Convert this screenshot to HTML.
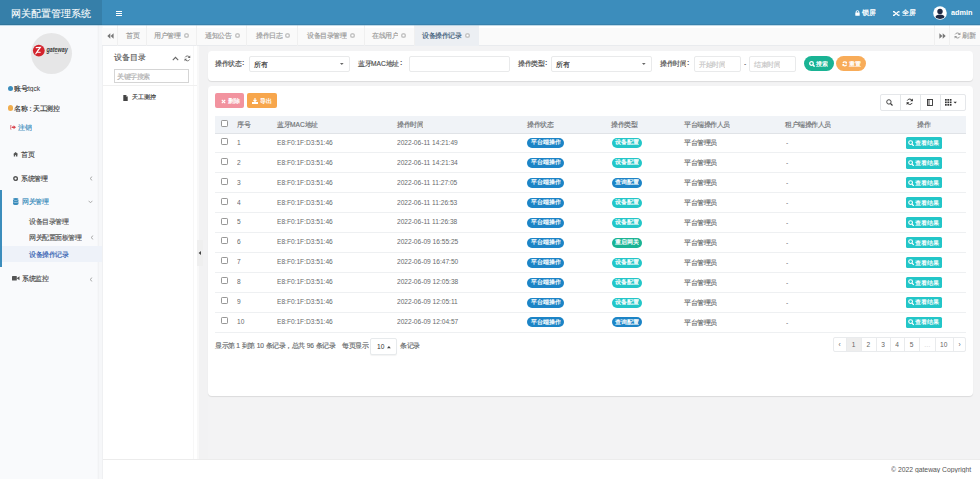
<!DOCTYPE html>
<html><head><meta charset="utf-8">
<style>
*{box-sizing:border-box;margin:0;padding:0}
html,body{width:980px;height:479px;overflow:hidden}
body{position:relative;background:#f3f3f4;font-family:"Liberation Sans",sans-serif;color:#676a6c;line-height:1}
.a{position:absolute;white-space:nowrap}
.t{transform:scale(.5);transform-origin:0 0;line-height:1;-webkit-text-stroke:.28px currentColor}
.t.b{-webkit-text-stroke:0}
svg{display:block}
</style></head>
<body>
<div class="a" style="left:0px;top:0px;width:980px;height:25px;background:#3c8dbc"></div>
<div class="a" style="left:0px;top:0px;width:102px;height:25px;background:#367fa9"></div>
<div class="a" style="left:0px;top:24px;width:980px;height:1px;background:rgba(0,0,0,.08)"></div>
<div class="a t" style="left:10.60px;top:7.92px;font-size:20.30px;color:#fff;font-weight:normal;-webkit-text-stroke:.15px #fff">网关配置管理系统</div>
<div class="a" style="left:115.8px;top:10.5px;width:6.6px;height:1.1px;background:#fff"></div>
<div class="a" style="left:115.8px;top:12.8px;width:6.6px;height:1.1px;background:#fff"></div>
<div class="a" style="left:115.8px;top:15.1px;width:6.6px;height:1.1px;background:#fff"></div>
<svg class="a" style="left:855.3px;top:9.8px" width="5" height="6" viewBox="0 0 5 6"><path d="M1.2 2.8V1.9a1.3 1.3 0 0 1 2.6 0v.9" fill="none" stroke="#fff" stroke-width="1"/><rect x="0.3" y="2.6" width="4.4" height="3.2" rx=".5" fill="#fff"/></svg>
<div class="a t b" style="left:861.50px;top:9.40px;font-size:14.40px;color:#fff;font-weight:bold;">锁屏</div>
<svg class="a" style="left:893.3px;top:10.5px" width="6.5" height="5" viewBox="0 0 6.5 5"><path d="M1 .8L5.5 4.2M5.5 .8L1 4.2" stroke="#fff" stroke-width="1.2"/><path d="M0 0h2.2L0 1.8zM6.5 0v1.8L4.3 0zM0 5V3.2L2.2 5zM6.5 5H4.3L6.5 3.2z" fill="#fff"/></svg>
<div class="a t b" style="left:901.50px;top:9.40px;font-size:14.40px;color:#fff;font-weight:bold;">全屏</div>
<svg class="a" style="left:933px;top:5.5px" width="14" height="14" viewBox="0 0 14 14"><circle cx="7" cy="7" r="6.8" fill="#fff"/><clipPath id="cp"><circle cx="7" cy="7" r="6"/></clipPath><g clip-path="url(#cp)" fill="#1f2a44"><circle cx="7" cy="5.4" r="2.7"/><path d="M1.5 14c0-4 2.5-5.6 5.5-5.6s5.5 1.6 5.5 5.6z"/></g></svg>
<div class="a t b" style="left:950.70px;top:8.58px;font-size:14.60px;color:#fff;font-weight:bold;">admin</div>
<div class="a" style="left:0px;top:25px;width:103px;height:454px;background:#f9fafc"></div>
<div class="a" style="left:96.5px;top:25px;width:6.5px;height:454px;background:#f6f7f9"></div>
<div class="a" style="left:98px;top:25px;width:1px;height:454px;background:#f1f2f4"></div>
<div class="a" style="left:101.5px;top:25px;width:1.5px;height:454px;background:#eff0f2"></div>
<div class="a" style="left:30.5px;top:32.5px;width:41px;height:41px;border-radius:50%;background:#e6e6e7"></div>
<svg class="a" style="left:30px;top:42px" width="40" height="16" viewBox="0 0 40 16"><circle cx="8.8" cy="8.6" r="5.9" fill="#d3232d"/><path d="M6.2 5.6l4.2-.3-3.6 4.9h3.4M8.6 7.2l-2.8 4.6" stroke="#fff" stroke-width="1.1" fill="none" stroke-linecap="round"/><text x="16.4" y="10.3" font-family="Liberation Sans" font-weight="bold" font-style="italic" font-size="7.6" fill="#3a3a3a" textLength="21.3" lengthAdjust="spacingAndGlyphs">gateway</text><rect x="24.5" y="11.4" width="4" height=".6" fill="#888"/></svg>
<div class="a" style="left:7.8px;top:85.5px;width:5.5px;height:5.5px;border-radius:50%;background:#3c8dbc"></div>
<div class="a t" style="left:13.50px;top:85.40px;font-size:13.20px;color:#333;font-weight:normal;">账号</div>
<div class="a t b" style="left:26.30px;top:84.88px;font-size:14.40px;color:#444;font-weight:bold;">:</div>
<div class="a t b" style="left:28.40px;top:84.94px;font-size:13.20px;color:#333;font-weight:normal;">tgck</div>
<div class="a" style="left:7.8px;top:105.3px;width:5.5px;height:5.5px;border-radius:50%;background:#f0ad4e"></div>
<div class="a t" style="left:13.50px;top:105.10px;font-size:13.20px;color:#333;font-weight:normal;">名称</div>
<div class="a t" style="left:26.90px;top:105.10px;font-size:13.20px;color:#333;font-weight:normal;">：</div>
<div class="a t" style="left:32.90px;top:105.10px;font-size:13.20px;color:#333;font-weight:normal;">天工测控</div>
<svg class="a" style="left:9.8px;top:125.3px" width="6.2" height="4.6" viewBox="0 0 6.2 4.6"><path d="M1.6 .4H.5v3.8h1.1" fill="none" stroke="#e06a72" stroke-width=".7"/><path d="M1.6 1.6h2V.3L6 2.3 3.6 4.3V3H1.6z" fill="#d9434e"/></svg>
<div class="a t" style="left:18.00px;top:123.70px;font-size:13.20px;color:#3c8dbc;font-weight:normal;">注销</div>
<svg class="a" style="left:13px;top:152px" width="5.2" height="4.5" viewBox="0 0 6 5.5"><path d="M3 0L0 2.6h.8v2.9h1.7V3.8h1v1.7h1.7V2.6H6z" fill="#555"/></svg>
<div class="a t" style="left:21.00px;top:151.00px;font-size:13.20px;color:#444;font-weight:normal;">首页</div>
<svg class="a" style="left:13px;top:175.5px" width="5.2" height="5.2" viewBox="0 0 6 6"><circle cx="3" cy="3" r="2.1" fill="none" stroke="#555" stroke-width="1.6"/></svg>
<div class="a t" style="left:20.50px;top:174.70px;font-size:13.20px;color:#444;font-weight:normal;">系统管理</div>
<svg class="a" style="left:88.5px;top:175.5px" width="4" height="5" viewBox="0 0 4 5"><path d="M3.2 .6L1 2.5 3.2 4.4" fill="none" stroke="#999" stroke-width=".8"/></svg>
<div class="a" style="left:0px;top:190px;width:2px;height:77px;background:#3c8dbc"></div>
<svg class="a" style="left:13px;top:198px" width="5.5" height="7" viewBox="0 0 5.5 7"><ellipse cx="2.75" cy="1.1" rx="2.75" ry="1.1" fill="#3c8dbc"/><path d="M0 1.7v1.5c0 .6 1.2 1.1 2.75 1.1s2.75-.5 2.75-1.1V1.7c-.6.5-1.6.7-2.75.7S.6 2.2 0 1.7zM0 4v1.7C0 6.4 1.2 7 2.75 7s2.75-.6 2.75-1.3V4c-.6.5-1.6.8-2.75.8S.6 4.5 0 4z" fill="#3c8dbc"/></svg>
<div class="a t" style="left:21.50px;top:198.00px;font-size:13.20px;color:#3c8dbc;font-weight:normal;">网关管理</div>
<svg class="a" style="left:87.5px;top:199.5px" width="5" height="4" viewBox="0 0 5 4"><path d="M.6 .8L2.5 2.8 4.4 .8" fill="none" stroke="#999" stroke-width=".8"/></svg>
<div class="a t" style="left:29.00px;top:217.70px;font-size:13.20px;color:#555;font-weight:normal;">设备目录管理</div>
<div class="a t" style="left:29.00px;top:234.30px;font-size:13.20px;color:#555;font-weight:normal;">网关配置面板管理</div>
<svg class="a" style="left:90px;top:235px" width="4" height="5" viewBox="0 0 4 5"><path d="M3.2 .6L1 2.5 3.2 4.4" fill="none" stroke="#999" stroke-width=".8"/></svg>
<div class="a" style="left:2px;top:246px;width:100px;height:16px;background:#eef2f9"></div>
<div class="a t" style="left:29.00px;top:250.70px;font-size:13.20px;color:#2f5bb0;font-weight:normal;">设备操作记录</div>
<svg class="a" style="left:12.3px;top:276.3px" width="7.5" height="4.5" viewBox="0 0 7.5 4.5"><rect x="0" y="0" width="4.8" height="4.5" rx=".6" fill="#555"/><path d="M4.6 2.25L7.5 .2V4.3z" fill="#555"/></svg>
<div class="a t" style="left:21.50px;top:275.20px;font-size:13.20px;color:#444;font-weight:normal;">系统监控</div>
<svg class="a" style="left:88.5px;top:276.5px" width="4" height="5" viewBox="0 0 4 5"><path d="M3.2 .6L1 2.5 3.2 4.4" fill="none" stroke="#999" stroke-width=".8"/></svg>
<div class="a" style="left:102px;top:25px;width:878px;height:21px;background:#fafafa;border-bottom:1px solid #e9ebee"></div>
<div class="a" style="left:103px;top:26px;width:877px;height:1.5px;background:#fff"></div>
<div class="a" style="left:102px;top:25px;width:15.5px;height:20.5px;border-right:1px solid #f0f0f0"></div>
<div class="a" style="left:117.5px;top:25px;width:29.5px;height:20.5px;border-right:1px solid #f0f0f0"></div>
<div class="a t" style="left:125.50px;top:32.30px;font-size:13.20px;color:#999;font-weight:normal;">首页</div>
<div class="a" style="left:147px;top:25px;width:50px;height:20.5px;border-right:1px solid #f0f0f0"></div>
<div class="a t" style="left:154.00px;top:32.30px;font-size:13.20px;color:#999;font-weight:normal;">用户管理</div>
<svg class="a" style="left:183.9px;top:33px" width="5" height="5" viewBox="0 0 5 5"><circle cx="2.5" cy="2.5" r="2.5" fill="#c4c4c4"/><circle cx="2.5" cy="2.5" r="1.1" fill="#fff"/></svg>
<div class="a" style="left:197px;top:25px;width:50px;height:20.5px;border-right:1px solid #f0f0f0"></div>
<div class="a t" style="left:205.00px;top:32.30px;font-size:13.20px;color:#999;font-weight:normal;">通知公告</div>
<svg class="a" style="left:234.9px;top:33px" width="5" height="5" viewBox="0 0 5 5"><circle cx="2.5" cy="2.5" r="2.5" fill="#c4c4c4"/><circle cx="2.5" cy="2.5" r="1.1" fill="#fff"/></svg>
<div class="a" style="left:247px;top:25px;width:51px;height:20.5px;border-right:1px solid #f0f0f0"></div>
<div class="a t" style="left:255.50px;top:32.30px;font-size:13.20px;color:#999;font-weight:normal;">操作日志</div>
<svg class="a" style="left:285.4px;top:33px" width="5" height="5" viewBox="0 0 5 5"><circle cx="2.5" cy="2.5" r="2.5" fill="#c4c4c4"/><circle cx="2.5" cy="2.5" r="1.1" fill="#fff"/></svg>
<div class="a" style="left:298px;top:25px;width:66.5px;height:20.5px;border-right:1px solid #f0f0f0"></div>
<div class="a t" style="left:307.00px;top:32.30px;font-size:13.20px;color:#999;font-weight:normal;">设备目录管理</div>
<svg class="a" style="left:350.1px;top:33px" width="5" height="5" viewBox="0 0 5 5"><circle cx="2.5" cy="2.5" r="2.5" fill="#c4c4c4"/><circle cx="2.5" cy="2.5" r="1.1" fill="#fff"/></svg>
<div class="a" style="left:364.5px;top:25px;width:50.0px;height:20.5px;border-right:1px solid #f0f0f0"></div>
<div class="a t" style="left:371.50px;top:32.30px;font-size:13.20px;color:#999;font-weight:normal;">在线用户</div>
<svg class="a" style="left:401.4px;top:33px" width="5" height="5" viewBox="0 0 5 5"><circle cx="2.5" cy="2.5" r="2.5" fill="#c4c4c4"/><circle cx="2.5" cy="2.5" r="1.1" fill="#fff"/></svg>
<div class="a" style="left:414.5px;top:25px;width:64px;height:20.5px;background:#eceff3"></div>
<div class="a t" style="left:422.00px;top:32.30px;font-size:13.20px;color:#3b5a78;font-weight:normal;">设备操作记录</div>
<svg class="a" style="left:465.1px;top:33px" width="5" height="5" viewBox="0 0 5 5"><circle cx="2.5" cy="2.5" r="2.5" fill="#c4c4c4"/><circle cx="2.5" cy="2.5" r="1.1" fill="#fff"/></svg>
<svg class="a" style="left:106.5px;top:32.5px" width="7" height="6" viewBox="0 0 7 6"><path d="M3.3 0.3L0.3 3 3.3 5.7zM6.6 0.3L3.6 3 6.6 5.7z" fill="#777"/></svg>
<div class="a" style="left:933.5px;top:25px;width:16px;height:20.5px;border-left:1px solid #f0f0f0;border-right:1px solid #f0f0f0"></div>
<svg class="a" style="left:938.5px;top:32.5px" width="7" height="6" viewBox="0 0 7 6"><path d="M0.4 0.3L3.4 3 0.4 5.7zM3.7 0.3L6.7 3 3.7 5.7z" fill="#777"/></svg>
<svg class="a" style="left:954px;top:32px" width="7" height="7" viewBox="0 0 7 7"><path d="M5.8 2.6A2.5 2.5 0 0 0 1.2 2.4M1.2 4.4a2.5 2.5 0 0 0 4.6.2" fill="none" stroke="#999" stroke-width="1"/><path d="M6.4 0.5v2.6H3.8zM0.6 6.5V3.9H3.2z" fill="#999"/></svg>
<div class="a t" style="left:961.50px;top:32.30px;font-size:13.20px;color:#999;font-weight:normal;">刷新</div>
<div class="a" style="left:103px;top:46px;width:93.5px;height:414px;background:#fff"></div>
<div class="a" style="left:193px;top:46px;width:1px;height:414px;background:#f7f7f7"></div>
<div class="a" style="left:196.5px;top:46px;width:11px;height:414px;background:#f8f8f8"></div>
<div class="a" style="left:199px;top:46px;width:8.5px;height:414px;background:#f2f2f3"></div>
<div class="a t" style="left:113.50px;top:53.20px;font-size:16.40px;color:#555;font-weight:normal;">设备目录</div>
<svg class="a" style="left:172px;top:56px" width="7" height="5" viewBox="0 0 7 5"><path d="M.8 4.2L3.5 1.3 6.2 4.2" fill="none" stroke="#666" stroke-width="1.1"/></svg>
<svg class="a" style="left:183.8px;top:55px" width="6.8" height="6.8" viewBox="0 0 7 7"><path d="M5.8 2.6A2.5 2.5 0 0 0 1.2 2.4M1.2 4.4a2.5 2.5 0 0 0 4.6.2" fill="none" stroke="#666" stroke-width="0.9"/><path d="M6.4 0.5v2.6H3.8zM0.6 6.5V3.9H3.2z" fill="#666"/></svg>
<div class="a" style="left:114px;top:68.9px;width:75px;height:13.7px;border:1px solid #d5d5d5;background:#fff"></div>
<div class="a t" style="left:117.00px;top:72.95px;font-size:13.00px;color:#b0b0b0;font-weight:normal;">关键字搜索</div>
<div class="a" style="left:103px;top:85px;width:93.5px;height:1px;background:#f0f0f0"></div>
<svg class="a" style="left:123px;top:94.8px" width="5" height="6.2" viewBox="0 0 5 7"><path d="M0 0h3l2 2v5H0z" fill="#444"/><path d="M3 0v2h2" fill="#aaa"/></svg>
<div class="a t" style="left:131.80px;top:94.20px;font-size:12.40px;color:#333;font-weight:normal;">天工测控</div>
<div class="a" style="left:196.5px;top:240px;width:6px;height:26px;background:#efefef"></div>
<svg class="a" style="left:198px;top:250.5px" width="3" height="4" viewBox="0 0 3 4"><path d="M3 0L0.6 2 3 4z" fill="#444"/></svg>
<div class="a" style="left:207.5px;top:51px;width:765.5px;height:30px;background:#fff;border-radius:4px;box-shadow:0 1px 1px rgba(0,0,0,.10)"></div>
<div class="a t" style="left:214.50px;top:59.90px;font-size:13.20px;color:#4a4a4a;font-weight:normal;">操作状态</div>
<div class="a t b" style="left:242.20px;top:59.40px;font-size:14.00px;color:#4a4a4a;font-weight:bold;">:</div>
<div class="a" style="left:248.5px;top:56px;width:101px;height:15.5px;background:#fff;border:1px solid #e9eaeb;border-radius:2px"></div>
<div class="a t" style="left:254.00px;top:60.50px;font-size:13.20px;color:#333;font-weight:normal;">所有</div>
<svg class="a" style="left:340.3px;top:63px" width="3.6" height="2" viewBox="0 0 4 2.2"><path d="M0 0h4L2 2.2z" fill="#666"/></svg>
<div class="a t" style="left:357.50px;top:60.10px;font-size:13.20px;color:#4a4a4a;font-weight:normal;">蓝牙MAC地址</div>
<div class="a t b" style="left:399.50px;top:59.40px;font-size:14.00px;color:#4a4a4a;font-weight:bold;">:</div>
<div class="a" style="left:408.5px;top:56px;width:101.5px;height:15.5px;background:#fff;border:1px solid #e9eaeb;border-radius:2px"></div>
<div class="a t" style="left:517.50px;top:59.90px;font-size:13.20px;color:#4a4a4a;font-weight:normal;">操作类型</div>
<div class="a t b" style="left:545.20px;top:59.40px;font-size:14.00px;color:#4a4a4a;font-weight:bold;">:</div>
<div class="a" style="left:551px;top:56px;width:101px;height:15.5px;background:#fff;border:1px solid #e9eaeb;border-radius:2px"></div>
<div class="a t" style="left:556.00px;top:60.50px;font-size:13.20px;color:#333;font-weight:normal;">所有</div>
<svg class="a" style="left:642.3px;top:63px" width="3.6" height="2" viewBox="0 0 4 2.2"><path d="M0 0h4L2 2.2z" fill="#666"/></svg>
<div class="a t" style="left:659.50px;top:59.90px;font-size:13.20px;color:#4a4a4a;font-weight:normal;">操作时间</div>
<div class="a t b" style="left:687.20px;top:59.40px;font-size:14.00px;color:#4a4a4a;font-weight:bold;">:</div>
<div class="a" style="left:694px;top:56px;width:46.5px;height:15.5px;background:#fff;border:1px solid #e9eaeb;border-radius:2px"></div>
<div class="a t" style="left:699.00px;top:60.50px;font-size:13.20px;color:#c4c4c4;font-weight:normal;">开始时间</div>
<div class="a t b" style="left:743.50px;top:60.20px;font-size:13.20px;color:#333;font-weight:normal;">-</div>
<div class="a" style="left:748.5px;top:56px;width:47px;height:15.5px;background:#fff;border:1px solid #e9eaeb;border-radius:2px"></div>
<div class="a t" style="left:753.50px;top:60.50px;font-size:13.20px;color:#c4c4c4;font-weight:normal;">结束时间</div>
<div class="a" style="left:803.6px;top:56.1px;width:30.2px;height:15.1px;background:#1ab394;border-radius:8px"></div>
<svg class="a" style="left:808.9px;top:60.9px" width="6" height="6" viewBox="0 0 6 6"><circle cx="2.5" cy="2.5" r="1.8" fill="none" stroke="#fff" stroke-width="1.3"/><path d="M3.8 3.8L5.6 5.6" stroke="#fff" stroke-width="1.5"/></svg>
<div class="a t b" style="left:816.20px;top:60.55px;font-size:12.20px;color:#fff;font-weight:bold;">搜索</div>
<div class="a" style="left:836.2px;top:56.1px;width:29.8px;height:15.1px;background:#f8ac59;border-radius:8px"></div>
<svg class="a" style="left:841.8px;top:61px" width="5.6" height="5.6" viewBox="0 0 7 7"><path d="M5.8 2.6A2.5 2.5 0 0 0 1.2 2.4M1.2 4.4a2.5 2.5 0 0 0 4.6.2" fill="none" stroke="#fff" stroke-width="1.5"/><path d="M6.4 0.5v2.6H3.8zM0.6 6.5V3.9H3.2z" fill="#fff"/></svg>
<div class="a t b" style="left:849.00px;top:60.55px;font-size:12.20px;color:#fff;font-weight:bold;">重置</div>
<div class="a" style="left:207.5px;top:86px;width:765.5px;height:310px;background:#fff;border-radius:4px;box-shadow:0 1px 1px rgba(0,0,0,.10)"></div>
<div class="a" style="left:215px;top:93.4px;width:29.4px;height:14.9px;background:#f2939f;border-radius:2px"></div>
<svg class="a" style="left:221px;top:98.5px" width="5" height="5" viewBox="0 0 5 5"><path d="M.8 .8L4.2 4.2M4.2 .8L.8 4.2" stroke="#fff" stroke-width="1.2"/></svg>
<div class="a t b" style="left:227.50px;top:98.00px;font-size:12.00px;color:#fff;font-weight:bold;">删除</div>
<div class="a" style="left:247.1px;top:93.4px;width:30.2px;height:14.9px;background:#f7a64c;border-radius:2px"></div>
<svg class="a" style="left:252px;top:97.8px" width="6" height="6" viewBox="0 0 6 6"><path d="M3 0v3.2M1.5 2L3 3.5 4.5 2" stroke="#fff" stroke-width="1.1" fill="none"/><path d="M0 4h6v2H0z" fill="#fff"/></svg>
<div class="a t b" style="left:259.50px;top:98.00px;font-size:12.00px;color:#fff;font-weight:bold;">导出</div>
<div class="a" style="left:879.5px;top:93.5px;width:86px;height:17.5px;border:1px solid #e5e7ea;border-radius:2px;background:#fff"></div>
<div class="a" style="left:899.5px;top:93.5px;width:1px;height:17.5px;background:#e3e6e8"></div>
<div class="a" style="left:919.5px;top:93.5px;width:1px;height:17.5px;background:#e3e6e8"></div>
<div class="a" style="left:939.5px;top:93.5px;width:1px;height:17.5px;background:#e3e6e8"></div>
<svg class="a" style="left:886px;top:98.5px" width="7" height="7" viewBox="0 0 7 7"><circle cx="2.9" cy="2.9" r="2.2" fill="none" stroke="#333" stroke-width=".9"/><path d="M4.5 4.5L6.5 6.5" stroke="#333" stroke-width="1.1"/></svg>
<svg class="a" style="left:905.8px;top:98.3px" width="7.5" height="7.5" viewBox="0 0 7 7"><path d="M5.8 2.6A2.5 2.5 0 0 0 1.2 2.4M1.2 4.4a2.5 2.5 0 0 0 4.6.2" fill="none" stroke="#333" stroke-width="0.9"/><path d="M6.4 0.5v2.6H3.8zM0.6 6.5V3.9H3.2z" fill="#333"/></svg>
<svg class="a" style="left:926.5px;top:98.5px" width="6" height="7" viewBox="0 0 6 7"><rect x=".5" y=".5" width="5" height="6" fill="none" stroke="#333" stroke-width=".9"/><path d="M2 .5v6" stroke="#333" stroke-width=".9"/></svg>
<svg class="a" style="left:945px;top:98.5px" width="13" height="7" viewBox="0 0 13 7"><g fill="#333"><rect x="0" y="0" width="1.7" height="1.7"/><rect x="2.4" y="0" width="1.7" height="1.7"/><rect x="4.8" y="0" width="1.7" height="1.7"/><rect x="0" y="2.5" width="1.7" height="1.7"/><rect x="2.4" y="2.5" width="1.7" height="1.7"/><rect x="4.8" y="2.5" width="1.7" height="1.7"/><rect x="0" y="5" width="1.7" height="1.7"/><rect x="2.4" y="5" width="1.7" height="1.7"/><rect x="4.8" y="5" width="1.7" height="1.7"/><path d="M8.5 2.8h3.4L10.2 4.6z"/></g></svg>
<div class="a" style="left:215px;top:116.2px;width:751px;height:18px;background:#f0f3f7;border-bottom:1px solid #e0e3e7"></div>
<div class="a" style="left:221px;top:120.3px;width:7px;height:7px;border:1px solid #979797;border-radius:1.2px;background:#fff"></div>
<div class="a t" style="left:236.50px;top:121.00px;font-size:13.20px;color:#6c6f72;font-weight:normal;">序号</div>
<div class="a t" style="left:276.50px;top:121.00px;font-size:13.20px;color:#6c6f72;font-weight:normal;">蓝牙MAC地址</div>
<div class="a t" style="left:396.50px;top:121.00px;font-size:13.20px;color:#6c6f72;font-weight:normal;">操作时间</div>
<div class="a t" style="left:527.00px;top:121.00px;font-size:13.20px;color:#6c6f72;font-weight:normal;">操作状态</div>
<div class="a t" style="left:611.00px;top:121.00px;font-size:13.20px;color:#6c6f72;font-weight:normal;">操作类型</div>
<div class="a t" style="left:684.00px;top:121.00px;font-size:13.20px;color:#6c6f72;font-weight:normal;">平台端操作人员</div>
<div class="a t" style="left:785.00px;top:121.00px;font-size:13.20px;color:#6c6f72;font-weight:normal;">租户端操作人员</div>
<div class="a t" style="left:917.00px;top:121.00px;font-size:13.20px;color:#6c6f72;font-weight:normal;">操作</div>
<div class="a" style="left:215px;top:152px;width:751px;height:1px;background:#eef0f2"></div>
<div class="a" style="left:221px;top:137.70000000000002px;width:7px;height:7px;border:1px solid #979797;border-radius:1.2px;background:#fff"></div>
<div class="a t b" style="left:237.00px;top:138.67px;font-size:13.20px;color:#676a6c;font-weight:normal;">1</div>
<div class="a t b" style="left:277.00px;top:138.67px;font-size:13.20px;color:#676a6c;font-weight:normal;">E8:F0:1F:D3:51:46</div>
<div class="a t b" style="left:397.00px;top:138.67px;font-size:13.20px;color:#676a6c;font-weight:normal;">2022-06-11 14:21:49</div>
<div class="a" style="left:527.3px;top:137.9px;width:36.7px;height:10px;background:#1c84c6;border-radius:5px"></div>
<div class="a t b" style="left:530.70px;top:139.40px;font-size:11.60px;color:#fff;font-weight:bold;">平台端操作</div>
<div class="a" style="left:611.5px;top:137.9px;width:30.3px;height:10px;background:#23c6c8;border-radius:5px"></div>
<div class="a t b" style="left:614.60px;top:139.40px;font-size:11.60px;color:#fff;font-weight:bold;">设备配置</div>
<div class="a t" style="left:684.00px;top:139.00px;font-size:13.20px;color:#676a6c;font-weight:normal;">平台管理员</div>
<div class="a t b" style="left:786.00px;top:139.00px;font-size:13.20px;color:#676a6c;font-weight:normal;">-</div>
<div class="a" style="left:906px;top:137.4px;width:36.3px;height:11.2px;background:#23c6c8;border-radius:1.5px"></div>
<svg class="a" style="left:908.3px;top:139.70000000000002px" width="6" height="6.5" viewBox="0 0 6 6.5"><circle cx="2.6" cy="2.6" r="1.9" fill="none" stroke="#fff" stroke-width="1.1"/><path d="M3.9 3.9L5.7 5.9" stroke="#fff" stroke-width="1.3"/></svg>
<div class="a t b" style="left:914.50px;top:139.85px;font-size:12.20px;color:#fff;font-weight:bold;">查看结果</div>
<div class="a" style="left:215px;top:172px;width:751px;height:1px;background:#eef0f2"></div>
<div class="a" style="left:221px;top:157.65px;width:7px;height:7px;border:1px solid #979797;border-radius:1.2px;background:#fff"></div>
<div class="a t b" style="left:237.00px;top:158.62px;font-size:13.20px;color:#676a6c;font-weight:normal;">2</div>
<div class="a t b" style="left:277.00px;top:158.62px;font-size:13.20px;color:#676a6c;font-weight:normal;">E8:F0:1F:D3:51:46</div>
<div class="a t b" style="left:397.00px;top:158.62px;font-size:13.20px;color:#676a6c;font-weight:normal;">2022-06-11 14:21:34</div>
<div class="a" style="left:527.3px;top:157.85px;width:36.7px;height:10px;background:#1c84c6;border-radius:5px"></div>
<div class="a t b" style="left:530.70px;top:159.35px;font-size:11.60px;color:#fff;font-weight:bold;">平台端操作</div>
<div class="a" style="left:611.5px;top:157.85px;width:30.3px;height:10px;background:#23c6c8;border-radius:5px"></div>
<div class="a t b" style="left:614.60px;top:159.35px;font-size:11.60px;color:#fff;font-weight:bold;">设备配置</div>
<div class="a t" style="left:684.00px;top:158.95px;font-size:13.20px;color:#676a6c;font-weight:normal;">平台管理员</div>
<div class="a t b" style="left:786.00px;top:158.95px;font-size:13.20px;color:#676a6c;font-weight:normal;">-</div>
<div class="a" style="left:906px;top:157.35px;width:36.3px;height:11.2px;background:#23c6c8;border-radius:1.5px"></div>
<svg class="a" style="left:908.3px;top:159.65px" width="6" height="6.5" viewBox="0 0 6 6.5"><circle cx="2.6" cy="2.6" r="1.9" fill="none" stroke="#fff" stroke-width="1.1"/><path d="M3.9 3.9L5.7 5.9" stroke="#fff" stroke-width="1.3"/></svg>
<div class="a t b" style="left:914.50px;top:159.80px;font-size:12.20px;color:#fff;font-weight:bold;">查看结果</div>
<div class="a" style="left:215px;top:192px;width:751px;height:1px;background:#eef0f2"></div>
<div class="a" style="left:221px;top:177.60000000000002px;width:7px;height:7px;border:1px solid #979797;border-radius:1.2px;background:#fff"></div>
<div class="a t b" style="left:237.00px;top:178.57px;font-size:13.20px;color:#676a6c;font-weight:normal;">3</div>
<div class="a t b" style="left:277.00px;top:178.57px;font-size:13.20px;color:#676a6c;font-weight:normal;">E8:F0:1F:D3:51:46</div>
<div class="a t b" style="left:397.00px;top:178.57px;font-size:13.20px;color:#676a6c;font-weight:normal;">2022-06-11 11:27:05</div>
<div class="a" style="left:527.3px;top:177.8px;width:36.7px;height:10px;background:#1c84c6;border-radius:5px"></div>
<div class="a t b" style="left:530.70px;top:179.30px;font-size:11.60px;color:#fff;font-weight:bold;">平台端操作</div>
<div class="a" style="left:611.5px;top:177.8px;width:30.3px;height:10px;background:#1c84c6;border-radius:5px"></div>
<div class="a t b" style="left:614.60px;top:179.30px;font-size:11.60px;color:#fff;font-weight:bold;">查询配置</div>
<div class="a t" style="left:684.00px;top:178.90px;font-size:13.20px;color:#676a6c;font-weight:normal;">平台管理员</div>
<div class="a t b" style="left:786.00px;top:178.90px;font-size:13.20px;color:#676a6c;font-weight:normal;">-</div>
<div class="a" style="left:906px;top:177.3px;width:36.3px;height:11.2px;background:#23c6c8;border-radius:1.5px"></div>
<svg class="a" style="left:908.3px;top:179.60000000000002px" width="6" height="6.5" viewBox="0 0 6 6.5"><circle cx="2.6" cy="2.6" r="1.9" fill="none" stroke="#fff" stroke-width="1.1"/><path d="M3.9 3.9L5.7 5.9" stroke="#fff" stroke-width="1.3"/></svg>
<div class="a t b" style="left:914.50px;top:179.75px;font-size:12.20px;color:#fff;font-weight:bold;">查看结果</div>
<div class="a" style="left:215px;top:212px;width:751px;height:1px;background:#eef0f2"></div>
<div class="a" style="left:221px;top:197.55px;width:7px;height:7px;border:1px solid #979797;border-radius:1.2px;background:#fff"></div>
<div class="a t b" style="left:237.00px;top:198.52px;font-size:13.20px;color:#676a6c;font-weight:normal;">4</div>
<div class="a t b" style="left:277.00px;top:198.52px;font-size:13.20px;color:#676a6c;font-weight:normal;">E8:F0:1F:D3:51:46</div>
<div class="a t b" style="left:397.00px;top:198.52px;font-size:13.20px;color:#676a6c;font-weight:normal;">2022-06-11 11:26:53</div>
<div class="a" style="left:527.3px;top:197.75px;width:36.7px;height:10px;background:#1c84c6;border-radius:5px"></div>
<div class="a t b" style="left:530.70px;top:199.25px;font-size:11.60px;color:#fff;font-weight:bold;">平台端操作</div>
<div class="a" style="left:611.5px;top:197.75px;width:30.3px;height:10px;background:#23c6c8;border-radius:5px"></div>
<div class="a t b" style="left:614.60px;top:199.25px;font-size:11.60px;color:#fff;font-weight:bold;">设备配置</div>
<div class="a t" style="left:684.00px;top:198.85px;font-size:13.20px;color:#676a6c;font-weight:normal;">平台管理员</div>
<div class="a t b" style="left:786.00px;top:198.85px;font-size:13.20px;color:#676a6c;font-weight:normal;">-</div>
<div class="a" style="left:906px;top:197.25px;width:36.3px;height:11.2px;background:#23c6c8;border-radius:1.5px"></div>
<svg class="a" style="left:908.3px;top:199.55px" width="6" height="6.5" viewBox="0 0 6 6.5"><circle cx="2.6" cy="2.6" r="1.9" fill="none" stroke="#fff" stroke-width="1.1"/><path d="M3.9 3.9L5.7 5.9" stroke="#fff" stroke-width="1.3"/></svg>
<div class="a t b" style="left:914.50px;top:199.70px;font-size:12.20px;color:#fff;font-weight:bold;">查看结果</div>
<div class="a" style="left:215px;top:232px;width:751px;height:1px;background:#eef0f2"></div>
<div class="a" style="left:221px;top:217.50000000000003px;width:7px;height:7px;border:1px solid #979797;border-radius:1.2px;background:#fff"></div>
<div class="a t b" style="left:237.00px;top:218.47px;font-size:13.20px;color:#676a6c;font-weight:normal;">5</div>
<div class="a t b" style="left:277.00px;top:218.47px;font-size:13.20px;color:#676a6c;font-weight:normal;">E8:F0:1F:D3:51:46</div>
<div class="a t b" style="left:397.00px;top:218.47px;font-size:13.20px;color:#676a6c;font-weight:normal;">2022-06-11 11:26:38</div>
<div class="a" style="left:527.3px;top:217.70000000000002px;width:36.7px;height:10px;background:#1c84c6;border-radius:5px"></div>
<div class="a t b" style="left:530.70px;top:219.20px;font-size:11.60px;color:#fff;font-weight:bold;">平台端操作</div>
<div class="a" style="left:611.5px;top:217.70000000000002px;width:30.3px;height:10px;background:#23c6c8;border-radius:5px"></div>
<div class="a t b" style="left:614.60px;top:219.20px;font-size:11.60px;color:#fff;font-weight:bold;">设备配置</div>
<div class="a t" style="left:684.00px;top:218.80px;font-size:13.20px;color:#676a6c;font-weight:normal;">平台管理员</div>
<div class="a t b" style="left:786.00px;top:218.80px;font-size:13.20px;color:#676a6c;font-weight:normal;">-</div>
<div class="a" style="left:906px;top:217.20000000000002px;width:36.3px;height:11.2px;background:#23c6c8;border-radius:1.5px"></div>
<svg class="a" style="left:908.3px;top:219.50000000000003px" width="6" height="6.5" viewBox="0 0 6 6.5"><circle cx="2.6" cy="2.6" r="1.9" fill="none" stroke="#fff" stroke-width="1.1"/><path d="M3.9 3.9L5.7 5.9" stroke="#fff" stroke-width="1.3"/></svg>
<div class="a t b" style="left:914.50px;top:219.65px;font-size:12.20px;color:#fff;font-weight:bold;">查看结果</div>
<div class="a" style="left:215px;top:252px;width:751px;height:1px;background:#eef0f2"></div>
<div class="a" style="left:221px;top:237.45000000000002px;width:7px;height:7px;border:1px solid #979797;border-radius:1.2px;background:#fff"></div>
<div class="a t b" style="left:237.00px;top:238.42px;font-size:13.20px;color:#676a6c;font-weight:normal;">6</div>
<div class="a t b" style="left:277.00px;top:238.42px;font-size:13.20px;color:#676a6c;font-weight:normal;">E8:F0:1F:D3:51:46</div>
<div class="a t b" style="left:397.00px;top:238.42px;font-size:13.20px;color:#676a6c;font-weight:normal;">2022-06-09 16:55:25</div>
<div class="a" style="left:527.3px;top:237.65px;width:36.7px;height:10px;background:#1c84c6;border-radius:5px"></div>
<div class="a t b" style="left:530.70px;top:239.15px;font-size:11.60px;color:#fff;font-weight:bold;">平台端操作</div>
<div class="a" style="left:611.5px;top:237.65px;width:30.3px;height:10px;background:#1ab394;border-radius:5px"></div>
<div class="a t b" style="left:614.60px;top:239.15px;font-size:11.60px;color:#fff;font-weight:bold;">重启网关</div>
<div class="a t" style="left:684.00px;top:238.75px;font-size:13.20px;color:#676a6c;font-weight:normal;">平台管理员</div>
<div class="a t b" style="left:786.00px;top:238.75px;font-size:13.20px;color:#676a6c;font-weight:normal;">-</div>
<div class="a" style="left:906px;top:237.15px;width:36.3px;height:11.2px;background:#23c6c8;border-radius:1.5px"></div>
<svg class="a" style="left:908.3px;top:239.45000000000002px" width="6" height="6.5" viewBox="0 0 6 6.5"><circle cx="2.6" cy="2.6" r="1.9" fill="none" stroke="#fff" stroke-width="1.1"/><path d="M3.9 3.9L5.7 5.9" stroke="#fff" stroke-width="1.3"/></svg>
<div class="a t b" style="left:914.50px;top:239.60px;font-size:12.20px;color:#fff;font-weight:bold;">查看结果</div>
<div class="a" style="left:215px;top:272px;width:751px;height:1px;background:#eef0f2"></div>
<div class="a" style="left:221px;top:257.4px;width:7px;height:7px;border:1px solid #979797;border-radius:1.2px;background:#fff"></div>
<div class="a t b" style="left:237.00px;top:258.37px;font-size:13.20px;color:#676a6c;font-weight:normal;">7</div>
<div class="a t b" style="left:277.00px;top:258.37px;font-size:13.20px;color:#676a6c;font-weight:normal;">E8:F0:1F:D3:51:46</div>
<div class="a t b" style="left:397.00px;top:258.37px;font-size:13.20px;color:#676a6c;font-weight:normal;">2022-06-09 16:47:50</div>
<div class="a" style="left:527.3px;top:257.6px;width:36.7px;height:10px;background:#1c84c6;border-radius:5px"></div>
<div class="a t b" style="left:530.70px;top:259.10px;font-size:11.60px;color:#fff;font-weight:bold;">平台端操作</div>
<div class="a" style="left:611.5px;top:257.6px;width:30.3px;height:10px;background:#23c6c8;border-radius:5px"></div>
<div class="a t b" style="left:614.60px;top:259.10px;font-size:11.60px;color:#fff;font-weight:bold;">设备配置</div>
<div class="a t" style="left:684.00px;top:258.70px;font-size:13.20px;color:#676a6c;font-weight:normal;">平台管理员</div>
<div class="a t b" style="left:786.00px;top:258.70px;font-size:13.20px;color:#676a6c;font-weight:normal;">-</div>
<div class="a" style="left:906px;top:257.1px;width:36.3px;height:11.2px;background:#23c6c8;border-radius:1.5px"></div>
<svg class="a" style="left:908.3px;top:259.4px" width="6" height="6.5" viewBox="0 0 6 6.5"><circle cx="2.6" cy="2.6" r="1.9" fill="none" stroke="#fff" stroke-width="1.1"/><path d="M3.9 3.9L5.7 5.9" stroke="#fff" stroke-width="1.3"/></svg>
<div class="a t b" style="left:914.50px;top:259.55px;font-size:12.20px;color:#fff;font-weight:bold;">查看结果</div>
<div class="a" style="left:215px;top:292px;width:751px;height:1px;background:#eef0f2"></div>
<div class="a" style="left:221px;top:277.35px;width:7px;height:7px;border:1px solid #979797;border-radius:1.2px;background:#fff"></div>
<div class="a t b" style="left:237.00px;top:278.32px;font-size:13.20px;color:#676a6c;font-weight:normal;">8</div>
<div class="a t b" style="left:277.00px;top:278.32px;font-size:13.20px;color:#676a6c;font-weight:normal;">E8:F0:1F:D3:51:46</div>
<div class="a t b" style="left:397.00px;top:278.32px;font-size:13.20px;color:#676a6c;font-weight:normal;">2022-06-09 12:05:38</div>
<div class="a" style="left:527.3px;top:277.55000000000007px;width:36.7px;height:10px;background:#1c84c6;border-radius:5px"></div>
<div class="a t b" style="left:530.70px;top:279.05px;font-size:11.60px;color:#fff;font-weight:bold;">平台端操作</div>
<div class="a" style="left:611.5px;top:277.55000000000007px;width:30.3px;height:10px;background:#23c6c8;border-radius:5px"></div>
<div class="a t b" style="left:614.60px;top:279.05px;font-size:11.60px;color:#fff;font-weight:bold;">设备配置</div>
<div class="a t" style="left:684.00px;top:278.65px;font-size:13.20px;color:#676a6c;font-weight:normal;">平台管理员</div>
<div class="a t b" style="left:786.00px;top:278.65px;font-size:13.20px;color:#676a6c;font-weight:normal;">-</div>
<div class="a" style="left:906px;top:277.05000000000007px;width:36.3px;height:11.2px;background:#23c6c8;border-radius:1.5px"></div>
<svg class="a" style="left:908.3px;top:279.35px" width="6" height="6.5" viewBox="0 0 6 6.5"><circle cx="2.6" cy="2.6" r="1.9" fill="none" stroke="#fff" stroke-width="1.1"/><path d="M3.9 3.9L5.7 5.9" stroke="#fff" stroke-width="1.3"/></svg>
<div class="a t b" style="left:914.50px;top:279.50px;font-size:12.20px;color:#fff;font-weight:bold;">查看结果</div>
<div class="a" style="left:215px;top:312px;width:751px;height:1px;background:#eef0f2"></div>
<div class="a" style="left:221px;top:297.29999999999995px;width:7px;height:7px;border:1px solid #979797;border-radius:1.2px;background:#fff"></div>
<div class="a t b" style="left:237.00px;top:298.27px;font-size:13.20px;color:#676a6c;font-weight:normal;">9</div>
<div class="a t b" style="left:277.00px;top:298.27px;font-size:13.20px;color:#676a6c;font-weight:normal;">E8:F0:1F:D3:51:46</div>
<div class="a t b" style="left:397.00px;top:298.27px;font-size:13.20px;color:#676a6c;font-weight:normal;">2022-06-09 12:05:11</div>
<div class="a" style="left:527.3px;top:297.5px;width:36.7px;height:10px;background:#1c84c6;border-radius:5px"></div>
<div class="a t b" style="left:530.70px;top:299.00px;font-size:11.60px;color:#fff;font-weight:bold;">平台端操作</div>
<div class="a" style="left:611.5px;top:297.5px;width:30.3px;height:10px;background:#23c6c8;border-radius:5px"></div>
<div class="a t b" style="left:614.60px;top:299.00px;font-size:11.60px;color:#fff;font-weight:bold;">设备配置</div>
<div class="a t" style="left:684.00px;top:298.60px;font-size:13.20px;color:#676a6c;font-weight:normal;">平台管理员</div>
<div class="a t b" style="left:786.00px;top:298.60px;font-size:13.20px;color:#676a6c;font-weight:normal;">-</div>
<div class="a" style="left:906px;top:297.0px;width:36.3px;height:11.2px;background:#23c6c8;border-radius:1.5px"></div>
<svg class="a" style="left:908.3px;top:299.29999999999995px" width="6" height="6.5" viewBox="0 0 6 6.5"><circle cx="2.6" cy="2.6" r="1.9" fill="none" stroke="#fff" stroke-width="1.1"/><path d="M3.9 3.9L5.7 5.9" stroke="#fff" stroke-width="1.3"/></svg>
<div class="a t b" style="left:914.50px;top:299.45px;font-size:12.20px;color:#fff;font-weight:bold;">查看结果</div>
<div class="a" style="left:215px;top:332px;width:751px;height:1px;background:#eef0f2"></div>
<div class="a" style="left:221px;top:317.25px;width:7px;height:7px;border:1px solid #979797;border-radius:1.2px;background:#fff"></div>
<div class="a t b" style="left:237.00px;top:318.22px;font-size:13.20px;color:#676a6c;font-weight:normal;">10</div>
<div class="a t b" style="left:277.00px;top:318.22px;font-size:13.20px;color:#676a6c;font-weight:normal;">E8:F0:1F:D3:51:46</div>
<div class="a t b" style="left:397.00px;top:318.22px;font-size:13.20px;color:#676a6c;font-weight:normal;">2022-06-09 12:04:57</div>
<div class="a" style="left:527.3px;top:317.45000000000005px;width:36.7px;height:10px;background:#1c84c6;border-radius:5px"></div>
<div class="a t b" style="left:530.70px;top:318.95px;font-size:11.60px;color:#fff;font-weight:bold;">平台端操作</div>
<div class="a" style="left:611.5px;top:317.45000000000005px;width:30.3px;height:10px;background:#1c84c6;border-radius:5px"></div>
<div class="a t b" style="left:614.60px;top:318.95px;font-size:11.60px;color:#fff;font-weight:bold;">查询配置</div>
<div class="a t" style="left:684.00px;top:318.55px;font-size:13.20px;color:#676a6c;font-weight:normal;">平台管理员</div>
<div class="a t b" style="left:786.00px;top:318.55px;font-size:13.20px;color:#676a6c;font-weight:normal;">-</div>
<div class="a" style="left:906px;top:316.95000000000005px;width:36.3px;height:11.2px;background:#23c6c8;border-radius:1.5px"></div>
<svg class="a" style="left:908.3px;top:319.25px" width="6" height="6.5" viewBox="0 0 6 6.5"><circle cx="2.6" cy="2.6" r="1.9" fill="none" stroke="#fff" stroke-width="1.1"/><path d="M3.9 3.9L5.7 5.9" stroke="#fff" stroke-width="1.3"/></svg>
<div class="a t b" style="left:914.50px;top:319.40px;font-size:12.20px;color:#fff;font-weight:bold;">查看结果</div>
<div class="a t" style="left:214.50px;top:342.10px;font-size:13.20px;color:#676a6c;font-weight:normal;">显示第 1 到第 10 条记录，总共 96 条记录</div>
<div class="a t" style="left:342.00px;top:342.10px;font-size:13.20px;color:#676a6c;font-weight:normal;">每页显示</div>
<div class="a" style="left:370.4px;top:338px;width:27.1px;height:16.6px;border:1px solid #e7eaec;border-radius:2px;background:#fff;box-shadow:0 1px 1px rgba(0,0,0,.05)"></div>
<div class="a t b" style="left:376.50px;top:342.87px;font-size:13.20px;color:#333;font-weight:normal;">10</div>
<svg class="a" style="left:387px;top:346.4px" width="3.8" height="2.2" viewBox="0 0 4 2.2"><path d="M0 2.2h4L2 0z" fill="#444"/></svg>
<div class="a t" style="left:400.00px;top:342.10px;font-size:13.20px;color:#676a6c;font-weight:normal;">条记录</div>
<div class="a" style="left:833px;top:337px;width:132.5px;height:14.5px;border:1px solid #e9ebed;border-radius:2px;background:#fff"></div>
<div class="a t b" style="left:833px;top:340.57px;width:26px;text-align:center;font-size:13.2px;color:#666">‹</div>
<div class="a" style="left:846px;top:337.5px;width:15px;height:13.5px;background:#eeeeee"></div>
<div class="a" style="left:846px;top:337px;width:1px;height:14.5px;background:#e9ebed"></div>
<div class="a t b" style="left:846px;top:340.57px;width:30px;text-align:center;font-size:13.2px;color:#666">1</div>
<div class="a" style="left:861px;top:337px;width:1px;height:14.5px;background:#e9ebed"></div>
<div class="a t b" style="left:861px;top:340.57px;width:29.0px;text-align:center;font-size:13.2px;color:#666">2</div>
<div class="a" style="left:875.5px;top:337px;width:1px;height:14.5px;background:#e9ebed"></div>
<div class="a t b" style="left:875.5px;top:340.57px;width:28.0px;text-align:center;font-size:13.2px;color:#666">3</div>
<div class="a" style="left:889.5px;top:337px;width:1px;height:14.5px;background:#e9ebed"></div>
<div class="a t b" style="left:889.5px;top:340.57px;width:28.0px;text-align:center;font-size:13.2px;color:#666">4</div>
<div class="a" style="left:903.5px;top:337px;width:1px;height:14.5px;background:#e9ebed"></div>
<div class="a t b" style="left:903.5px;top:340.57px;width:30.0px;text-align:center;font-size:13.2px;color:#666">5</div>
<div class="a" style="left:918.5px;top:337px;width:1px;height:14.5px;background:#e9ebed"></div>
<div class="a t b" style="left:918.5px;top:340.57px;width:33.0px;text-align:center;font-size:13.2px;color:#ccc">…</div>
<div class="a" style="left:935px;top:337px;width:1px;height:14.5px;background:#e9ebed"></div>
<div class="a t b" style="left:935px;top:340.57px;width:35.0px;text-align:center;font-size:13.2px;color:#666">10</div>
<div class="a" style="left:952.5px;top:337px;width:1px;height:14.5px;background:#e9ebed"></div>
<div class="a t b" style="left:952.5px;top:340.57px;width:26.0px;text-align:center;font-size:13.2px;color:#666">›</div>
<div class="a" style="left:0px;top:25px;width:980px;height:1px;background:rgba(60,141,188,.30)"></div>
<div class="a" style="left:103px;top:459px;width:877px;height:20px;background:#fff;border-top:1px solid #ececec"></div>
<div class="a t b" style="left:891.00px;top:465.76px;font-size:13.60px;color:#555;font-weight:normal;">© 2022 gateway Copyright</div>
</body></html>
